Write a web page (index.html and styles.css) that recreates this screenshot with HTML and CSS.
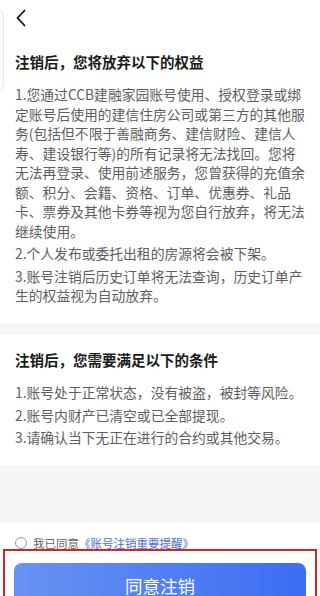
FILE: index.html
```html
<!DOCTYPE html>
<html lang="zh-CN">
<head>
  <meta charset="UTF-8">
  <meta name="viewport" content="width=device-width, initial-scale=1.0">
  <title>注销账号</title>
  <link rel="stylesheet" href="styles.css">
</head>
<body>
  <div class="page">
    <div class="edge-tab"></div>
    <div class="content">
      <header class="topbar">
        <svg class="back" width="12" height="18" viewBox="0 0 12 18">
          <polyline points="9.5,1.5 2.5,9 9.5,16.5" fill="none" stroke="#111" stroke-width="1.8" stroke-linecap="round" stroke-linejoin="round"/>
        </svg>
      </header>
      <section class="card card-first">
        <h2 class="card-title">注销后，您将放弃以下的权益</h2>
        <p>1.您通过CCB建融家园账号使用、授权登录或绑定账号后使用的建信住房公司或第三方的其他服务(包括但不限于善融商务、建信财险、建信人寿、建设银行等)的所有记录将无法找回。您将无法再登录、使用前述服务，您曾获得的充值余额、积分、会籍、资格、订单、优惠券、礼品卡、票券及其他卡券等视为您自行放弃，将无法继续使用。</p>
        <p>2.个人发布或委托出租的房源将会被下架。</p>
        <p>3.账号注销后历史订单将无法查询，历史订单产生的权益视为自动放弃。</p>
      </section>
      <section class="card">
        <h2 class="card-title">注销后，您需要满足以下的条件</h2>
        <p>1.账号处于正常状态，没有被盗，被封等风险。</p>
        <p>2.账号内财产已清空或已全部提现。</p>
        <p>3.请确认当下无正在进行的合约或其他交易。</p>
      </section>
    </div>
    <footer class="footer">
      <label class="agree">
        <span class="radio"></span>
        <span>我已同意</span><span class="link">《账号注销重要提醒》</span>
      </label>
      <button class="btn-confirm">同意注销</button>
      <div class="mark"></div>
    </footer>
  </div>
</body>
</html>
```

FILE: styles.css
```css
* {
  box-sizing: border-box;
}

body {
  margin: 0;
  background: #f5f5f5;
  font-family: "Noto Sans CJK SC", "Noto Sans", sans-serif;
}

.page {
  position: relative;
  height: 100vh;
  display: flex;
  flex-direction: column;
  overflow: hidden;
}

.edge-tab {
  position: absolute;
  top: 8px;
  left: -16px;
  width: 20px;
  height: 84px;
  border: 1px solid #e4e4e4;
  border-radius: 8px;
}

.content {
  flex: 1;
}

.topbar {
  height: 36px;
  padding: 9px 0 0 15px;
  background: #fff;
}

.back {
  display: block;
}

.card {
  background: #fff;
  padding: 15px 15px 17.5px;
  margin-top: 12px;
}

.card-first {
  margin-top: 0;
  padding-top: 16px;
}

.card-title {
  margin: 0 0 13px;
  font-size: 14.5px;
  line-height: 20px;
  font-weight: bold;
  color: #1a1a1a;
}

.card p {
  margin: 0 0 3px;
  font-size: 13.8px;
  line-height: 19.5px;
  color: #5e5e5e;
}

.card p:last-child {
  margin-bottom: 0;
}

.footer {
  position: relative;
  flex: none;
  height: 73px;
  padding: 14px 14px 0 15px;
  background: #fff;
}

.agree {
  display: flex;
  align-items: center;
  height: 12px;
  font-size: 11.5px;
  color: #666;
}

.radio {
  width: 12px;
  height: 12px;
  margin-right: 6px;
  border: 1px solid #999;
  border-radius: 50%;
}

.link {
  color: #4a6dd6;
}

.btn-confirm {
  display: block;
  width: 292px;
  height: 44px;
  margin: 14px 0 0 -1px;
  border: none;
  border-radius: 8px;
  background: linear-gradient(90deg, #6892f2, #3c6df4);
  color: #fff;
  font-family: inherit;
  font-size: 17.5px;
}

.mark {
  position: absolute;
  top: 26px;
  left: 3px;
  right: 3px;
  height: 70px;
  border: 2px solid #d9261c;
}
```
